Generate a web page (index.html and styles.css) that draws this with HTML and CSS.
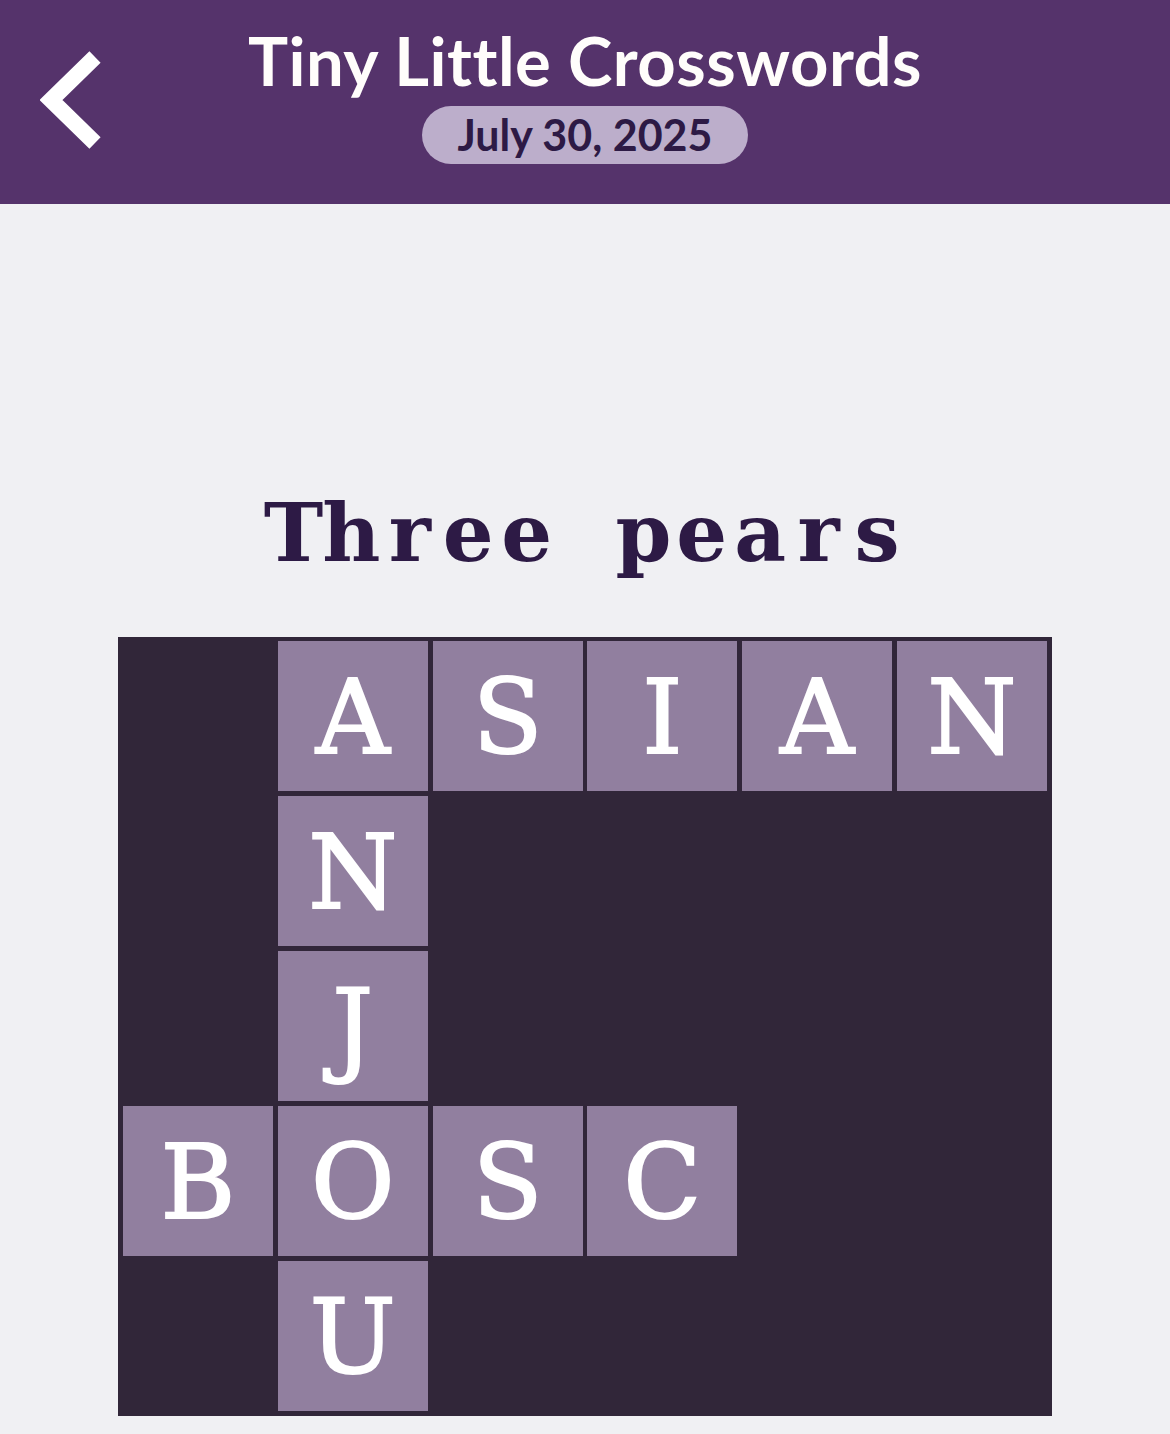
FILE: index.html
```html
<!DOCTYPE html>
<html>
<head>
<meta charset="utf-8">
<link rel="stylesheet" href="styles.css">
</head>
<body>
<header class="topbar">
  <div class="back">
    <svg width="80" height="110" viewBox="0 0 80 110" class="chev">
      <polyline points="55,12 11,55 55,98" fill="none" stroke="#ffffff" stroke-width="16" stroke-linejoin="miter"/>
    </svg>
  </div>
  <div class="titles">
    <h1 class="app-title">Tiny Little Crosswords</h1>
    <div class="date-pill">July 30, 2025</div>
  </div>
  <div class="spacer"></div>
</header>
<main class="content">
  <h2 class="puzzle-title"><span class="ch">T</span><span class="ch">h</span><span class="ch">r</span><span class="ch">e</span><span class="ch">e</span><span class="ch"> </span><span class="ch">p</span><span class="ch">e</span><span class="ch">a</span><span class="ch">r</span><span class="ch">s</span></h2>
  <div class="board">
    <div class="cell block"></div>
    <div class="cell">A</div>
    <div class="cell">S</div>
    <div class="cell">I</div>
    <div class="cell">A</div>
    <div class="cell">N</div>

    <div class="cell block"></div>
    <div class="cell">N</div>
    <div class="cell block"></div>
    <div class="cell block"></div>
    <div class="cell block"></div>
    <div class="cell block"></div>

    <div class="cell block"></div>
    <div class="cell">J</div>
    <div class="cell block"></div>
    <div class="cell block"></div>
    <div class="cell block"></div>
    <div class="cell block"></div>

    <div class="cell">B</div>
    <div class="cell">O</div>
    <div class="cell">S</div>
    <div class="cell">C</div>
    <div class="cell block"></div>
    <div class="cell block"></div>

    <div class="cell block"></div>
    <div class="cell">U</div>
    <div class="cell block"></div>
    <div class="cell block"></div>
    <div class="cell block"></div>
    <div class="cell block"></div>
  </div>
</main>
</body>
</html>
```
FILE: styles.css
```css
html, body {
  margin: 0;
  padding: 0;
}
body {
  background: #f0f0f3;
  width: 1170px;
  height: 1434px;
  overflow: hidden;
  font-family: "Lato", "Noto Sans", sans-serif;
}
.topbar {
  height: 204px;
  background: #55336b;
  display: grid;
  grid-template-columns: 1fr auto 1fr;
  align-items: start;
  box-sizing: border-box;
}
.back {
  padding: 45px 0 0 40px;
}
.chev {
  display: block;
}
.titles {
  display: flex;
  flex-direction: column;
  align-items: center;
  padding-top: 21px;
}
.app-title {
  margin: 0;
  color: #fffdfb;
  font-family: "Lato", sans-serif;
  font-weight: 700;
  font-size: 67px;
  line-height: 78px;
  letter-spacing: 0.5px;
}
.date-pill {
  margin-top: 7px;
  height: 58px;
  padding: 0 35px;
  border-radius: 29px;
  background: #bcaecb;
  color: #2d1a45;
  font-family: "Lato", sans-serif;
  font-weight: 700;
  font-size: 43px;
  line-height: 58px;
}
.content {
  display: flex;
  flex-direction: column;
  align-items: center;
}
.puzzle-title {
  margin: 279px 0 0 0;
  color: #2d1a45;
  font-family: "DejaVu Serif", "Liberation Serif", serif;
  font-weight: 700;
  font-size: 80px;
  line-height: 100px;
  white-space: pre;
}
.ch {
  display: inline-block;
  width: 58.4px;
  text-align: center;
}
.board {
  margin-top: 54px;
  background: #312639;
  display: grid;
  grid-template-columns: repeat(6, 150px);
  grid-auto-rows: 150px;
  gap: 5px 4.8px;
  padding: 4px 5px 5px 5px;
}
.cell {
  background: #917f9f;
  color: #ffffff;
  font-family: "DejaVu Serif", "Liberation Serif", serif;
  font-size: 102px;
  line-height: 146px;
  text-align: center;
  box-sizing: border-box;
  padding-top: 4px;
  -webkit-text-stroke: 2px #ffffff;
}
.cell.block {
  background: transparent;
}
```
